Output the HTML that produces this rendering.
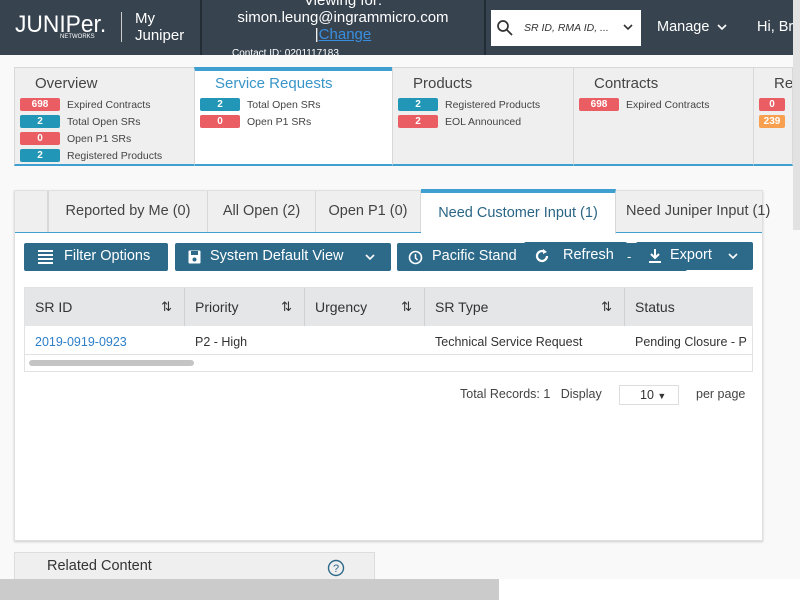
<!DOCTYPE html>
<html><head><meta charset="utf-8"><style>
*{box-sizing:border-box;margin:0;padding:0}
body{width:800px;height:600px;overflow:hidden;background:#f9f9f9;font-family:"Liberation Sans",sans-serif;position:relative;color:#333}
.abs{position:absolute;white-space:nowrap}
.hdr{left:0;top:0;width:800px;height:55px;background:#37434f;color:#fff}
.tile{top:67px;height:99px;background:#efefef;border:1px solid #d8d8d8;border-bottom:2px solid #3e9fd0}
.tile h3{font-weight:normal;font-size:15px;color:#444;margin:7px 0 4px 20px}
.row{display:flex;align-items:center;height:17px;font-size:10.5px;color:#444;margin-left:5px}
.b{width:40px;height:13px;border-radius:2px;color:#fff;font-weight:bold;font-size:10px;text-align:center;line-height:13px;margin-right:7px}
.r{background:#e95d63}.t{background:#2196b6}.o{background:#f9a050}
.tab{top:191px;height:41px;font-size:14.5px;color:#444;background:#efefef;border-right:1px solid #d8d8d8;line-height:40px;text-align:center}
.btn{top:243px;height:28px;background:#2d6a8a;color:#fff;font-size:14.5px;line-height:27px;border-radius:2px}
.th{top:288px;height:38px;background:#e4e6e8;font-size:14px;line-height:38px;padding-left:10px;border-right:1px solid #d0d0d0}
.td{top:326px;height:28px;font-size:12.5px;line-height:32px;padding-left:10px}
.ar{position:absolute;right:12px;top:0;font-size:13px}
</style></head><body>
<div class="abs hdr">
 <div class="abs" style="left:15px;top:11px;font-size:24px;letter-spacing:0px;font-weight:normal;transform:scaleX(0.95);transform-origin:left">JUNIPer.</div>
 <div class="abs" style="left:60px;top:34px;font-size:6px">NETWORKS</div>
 <div class="abs" style="left:121px;top:12px;width:1px;height:30px;background:#ccc"></div>
 <div class="abs" style="left:135px;top:10px;font-size:15px;line-height:17px">My<br>Juniper</div>
 <div class="abs" style="left:200px;top:0;width:2px;height:55px;background:#222d36"></div>
 <div class="abs" style="left:202px;top:-8px;width:282px;text-align:center;font-size:15px;line-height:17px">Viewing for:<br>simon.leung@ingrammicro.com<br>|<span style="color:#3a8ee0;text-decoration:underline">Change</span></div>
 <div class="abs" style="left:232px;top:48px;font-size:10px">Contact ID: 0201117183</div>
 <div class="abs" style="left:484px;top:0;width:2px;height:55px;background:#222d36"></div>
 <div class="abs" style="left:491px;top:10px;width:150px;height:36px;background:#fff;color:#333">
  <svg class="abs" style="left:6px;top:10px" width="16" height="16"><circle cx="6" cy="6" r="5" fill="none" stroke="#333" stroke-width="1.7"/><path d="M10 10l5 5" stroke="#333" stroke-width="1.8"/></svg>
  <span class="abs" style="left:33px;top:12px;font-size:10.5px;font-style:italic">SR ID, RMA ID, ...</span>
  <svg class="abs" style="left:132px;top:14px" width="10" height="8"><path d="M1 1l4 4 4-4" fill="none" stroke="#333" stroke-width="1.6"/></svg>
 </div>
 <div class="abs" style="left:657px;top:19px;font-size:14.5px">Manage</div>
 <svg class="abs" style="left:717px;top:24px" width="10" height="8"><path d="M1 1l4 4 4-4" fill="none" stroke="#fff" stroke-width="1.6"/></svg>
 <div class="abs" style="left:757px;top:19px;font-size:14.5px">Hi, Bra</div>
</div>
<div class="abs" style="left:793px;top:0;width:7px;height:230px;background:#e2e2e2"></div>
<div class="abs tile" style="left:14px;width:181px"><h3>Overview</h3>
 <div class="row"><div class="b r">698</div>Expired Contracts</div>
 <div class="row"><div class="b t">2</div>Total Open SRs</div>
 <div class="row"><div class="b r">0</div>Open P1 SRs</div>
 <div class="row"><div class="b t">2</div>Registered Products</div></div>
<div class="abs tile" style="left:194px;width:199px;background:#fff;border-top:4px solid #3e9fd0"><h3 style="color:#3a95c8;margin-top:4px">Service Requests</h3>
 <div class="row"><div class="b t">2</div>Total Open SRs</div>
 <div class="row"><div class="b r">0</div>Open P1 SRs</div></div>
<div class="abs tile" style="left:392px;width:182px"><h3>Products</h3>
 <div class="row"><div class="b t">2</div>Registered Products</div>
 <div class="row"><div class="b r">2</div>EOL Announced</div></div>
<div class="abs tile" style="left:573px;width:181px"><h3>Contracts</h3>
 <div class="row"><div class="b r">698</div>Expired Contracts</div></div>
<div class="abs tile" style="left:753px;width:40px;overflow:hidden"><h3>Re</h3>
 <div class="row"><div class="b r">0</div></div>
 <div class="row"><div class="b o">239</div></div></div>

<div class="abs" style="left:14px;top:190px;width:749px;height:351px;background:#fff;border:1px solid #e0e0e0;box-shadow:0 1px 2px #ccc"></div>
<div class="abs" style="left:15px;top:191px;width:747px;height:42px;background:#efefef;border-bottom:2px solid #3e9fd0"></div>
<div class="abs tab" style="left:15px;width:33px"></div>
<div class="abs tab" style="left:48px;width:160px;border-left:1px solid #d8d8d8">Reported by Me (0)</div>
<div class="abs tab" style="left:208px;width:108px">All Open (2)</div>
<div class="abs tab" style="left:316px;width:105px">Open P1 (0)</div>
<div class="abs tab" style="left:421px;top:189px;width:195px;height:45px;background:#fff;border-top:4px solid #3e9fd0;color:#2a6585">Need Customer Input (1)</div>
<div class="abs tab" style="left:616px;width:146px;text-align:left;padding-left:10px;border:none">Need Juniper Input (1)</div>

<div class="abs btn" style="left:24px;width:144px;padding-left:40px">Filter Options</div>
<svg class="abs" style="left:38px;top:250px" width="15" height="14"><path d="M0 1h15M0 5h15M0 9h15M0 13h15" stroke="#fff" stroke-width="2"/></svg>
<div class="abs btn" style="left:175px;width:216px;padding-left:35px">System Default View</div>
<svg class="abs" style="left:188px;top:250px" width="13" height="14"><rect x="0.5" y="0.5" width="12" height="13" rx="1" fill="#fff"/><rect x="3" y="1" width="7" height="4" fill="#2d6a8a"/><circle cx="6.5" cy="9.5" r="2" fill="#2d6a8a"/></svg>
<svg class="abs" style="left:365px;top:254px" width="10" height="8"><path d="M1 1l4 4 4-4" fill="none" stroke="#fff" stroke-width="1.6"/></svg>
<div class="abs btn" style="left:397px;width:290px;padding-left:35px">Pacific Stand</div>
<svg class="abs" style="left:408px;top:250px" width="15" height="15"><circle cx="7.5" cy="7.5" r="6" fill="none" stroke="#fff" stroke-width="1.6"/><path d="M7.5 4v4l2 2" fill="none" stroke="#fff" stroke-width="1.5"/></svg>
<div class="abs btn" style="left:524px;top:242px;width:103px;padding-left:39px;background:#2d6a8a">Refresh</div>
<svg class="abs" style="left:534px;top:248px" width="16" height="16"><path d="M13 8a5 5 0 1 1-2-4" fill="none" stroke="#fff" stroke-width="2.2"/><path d="M9 1l4 3-4 2z" fill="#fff"/></svg>
<div class="abs" style="left:627px;top:249px;color:#fff;font-size:13px">-</div>
<div class="abs btn" style="left:636px;top:242px;width:117px;padding-left:34px">Export</div>
<svg class="abs" style="left:648px;top:248px" width="14" height="16"><path d="M7 1v9M3 6l4 4 4-4" fill="none" stroke="#fff" stroke-width="2"/><path d="M1 14h12" stroke="#fff" stroke-width="2"/></svg>
<svg class="abs" style="left:728px;top:253px" width="10" height="8"><path d="M1 1l4 4 4-4" fill="none" stroke="#fff" stroke-width="1.6"/></svg>

<div class="abs" style="left:24px;top:287px;width:729px;height:85px;border:1px solid #e2e2e2;background:#fff"></div>
<div class="abs th" style="left:25px;width:160px">SR ID<span class="ar">⇅</span></div>
<div class="abs th" style="left:185px;width:120px">Priority<span class="ar">⇅</span></div>
<div class="abs th" style="left:305px;width:120px">Urgency<span class="ar">⇅</span></div>
<div class="abs th" style="left:425px;width:200px">SR Type<span class="ar">⇅</span></div>
<div class="abs th" style="left:625px;width:128px;border:none">Status</div>
<div class="abs td" style="left:25px;color:#2d7fc8">2019-0919-0923</div>
<div class="abs td" style="left:185px">P2 - High</div>
<div class="abs td" style="left:425px">Technical Service Request</div>
<div class="abs td" style="left:625px;width:128px;overflow:hidden">Pending Closure - P</div>
<div class="abs" style="left:25px;top:354px;width:728px;height:1px;background:#e2e2e2"></div>
<div class="abs" style="left:29px;top:360px;width:165px;height:6px;border-radius:3px;background:#c4c4c4"></div>

<div class="abs" style="left:460px;top:387px;font-size:12.5px;color:#444">Total Records: 1&nbsp;&nbsp; Display</div>
<div class="abs" style="left:619px;top:385px;width:60px;height:20px;border:1px solid #ddd;font-size:12.5px;padding-left:20px;line-height:19px">10 <span style="font-size:9px">▼</span></div>
<div class="abs" style="left:696px;top:387px;font-size:12.5px;color:#444">per page</div>

<div class="abs" style="left:14px;top:552px;width:361px;height:40px;background:#efefef;border:1px solid #ddd"></div>
<div class="abs" style="left:47px;top:558px;font-size:14.5px;color:#333">Related Content</div>
<svg class="abs" style="left:327px;top:559px" width="18" height="18"><circle cx="9" cy="9" r="7.5" fill="none" stroke="#2d6a8a" stroke-width="1.4"/><text x="9" y="13" font-size="11" text-anchor="middle" fill="#2d6a8a" font-family="Liberation Sans">?</text></svg>
<div class="abs" style="left:0;top:579px;width:499px;height:21px;background:#cbcbcb"></div>
<div class="abs" style="left:499px;top:579px;width:301px;height:21px;background:#fff"></div>
</body></html>
